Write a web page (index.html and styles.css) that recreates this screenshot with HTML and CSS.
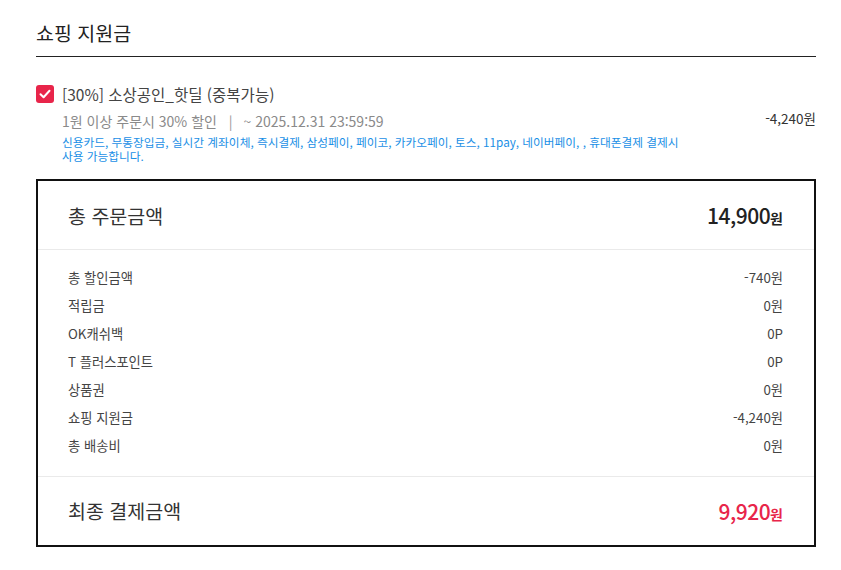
FILE: index.html
```html
<!DOCTYPE html>
<html lang="ko">
<head>
<meta charset="utf-8">
<link rel="stylesheet" href="styles.css">
</head>
<body>
<div class="page">
  <h2 class="title">쇼핑 지원금</h2>
  <div class="coupon">
    <div class="coupon-main">
      <div class="coupon-head">
        <span class="check"><svg width="12" height="10" viewBox="0 0 12 10"><path d="M1.5 5.2 L4.6 8.2 L10.5 1.8" fill="none" stroke="#fff" stroke-width="2" stroke-linecap="round" stroke-linejoin="round"/></svg></span>
        <span class="coupon-name">[30%] 소상공인_핫딜 (중복가능)</span>
      </div>
      <div class="coupon-cond">1원 이상 주문시 30% 할인 <span class="sep">|</span> ~ 2025.12.31 23:59:59</div>
      <div class="coupon-note">신용카드, 무통장입금, 실시간 계좌이체, 즉시결제, 삼성페이, 페이코, 카카오페이, 토스, 11pay, 네이버페이, , 휴대폰결제 결제시 사용 가능합니다.</div>
    </div>
    <div class="coupon-amt">-4,240원</div>
  </div>
  <div class="summary">
    <div class="sum-top">
      <span class="big-label">총 주문금액</span>
      <span class="big-amt">14,900<small>원</small></span>
    </div>
    <div class="sum-rows">
      <div class="row"><span>총 할인금액</span><span>-740원</span></div>
      <div class="row"><span>적립금</span><span>0원</span></div>
      <div class="row"><span>OK캐쉬백</span><span>0P</span></div>
      <div class="row"><span>T 플러스포인트</span><span>0P</span></div>
      <div class="row"><span>상품권</span><span>0원</span></div>
      <div class="row"><span>쇼핑 지원금</span><span>-4,240원</span></div>
      <div class="row"><span>총 배송비</span><span>0원</span></div>
    </div>
    <div class="sum-bottom">
      <span class="big-label">최종 결제금액</span>
      <span class="big-amt red">9,920<small>원</small></span>
    </div>
  </div>
</div>
</body>
</html>
```
FILE: styles.css
```css
* { box-sizing: border-box; }
html, body { margin: 0; padding: 0; background: #fff; }
body {
  font-family: "Noto Sans CJK KR", "Noto Sans", sans-serif;
  color: #333;
}
.page {
  width: 841px;
  padding: 0 25px 0 36px;
}
.title {
  margin: 0;
  padding-top: 19px;
  height: 57px;
  font-size: 19.5px;
  font-weight: 400;
  line-height: 28px;
  color: #222;
  border-bottom: 1px solid #222;
}
.coupon {
  display: flex;
  justify-content: space-between;
  padding-top: 25px;
  height: 122px;
  align-items: flex-start;
}
.coupon-head {
  display: flex;
  align-items: center;
  height: 24px;
}
.check {
  width: 18px;
  height: 18px;
  border-radius: 3px;
  background: #e8254a;
  display: flex;
  align-items: center;
  justify-content: center;
  margin-right: 8px;
}
.coupon-name {
  font-size: 15.5px;
  color: #444;
  line-height: 24px;
}
.coupon-cond {
  margin-top: 6px;
  padding-left: 26px;
  font-size: 14px;
  line-height: 18px;
  color: #8a8a8a;
}
.sep { margin: 0 7px 0 8px; color: #999; }
.coupon-note {
  margin-top: 5px;
  padding-left: 26px;
  width: 652px;
  font-size: 11.7px;
  line-height: 14px;
  color: #1a8fe6;
}
.coupon-amt {
  margin-top: 26px;
  font-size: 13.5px;
  line-height: 20px;
  color: #333;
}
.summary {
  border: 2px solid #111;
  padding: 0 31px 0 30px;
}
.sum-top, .sum-bottom {
  display: flex;
  justify-content: space-between;
  align-items: center;
  margin: 0 -31px 0 -30px;
  padding: 0 31px 0 30px;
}
.sum-top { border-bottom: 1px solid #eaeaea; height: 69px; }
.sum-bottom { border-top: 1px solid #eaeaea; height: 69px; padding-bottom: 1px; }
.big-label {
  font-size: 19.5px;
  color: #333;
}
.big-amt {
  font-size: 21px;
  font-weight: 500;
  color: #222;
  letter-spacing: -0.5px;
}
.big-amt small {
  font-size: 14px;
  font-weight: 700;
  letter-spacing: 0;
}
.big-amt.red { color: #e8254a; }
.sum-rows {
  padding: 14px 0 16px;
}
.row {
  display: flex;
  justify-content: space-between;
  height: 28px;
  line-height: 28px;
  font-size: 13.3px;
  color: #444;
}
```
